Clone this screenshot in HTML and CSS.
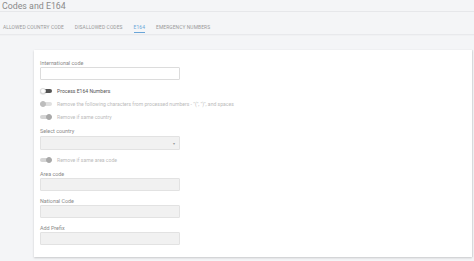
FILE: index.html
```html
<!DOCTYPE html>
<html>
<head>
<meta charset="utf-8">
<link rel="stylesheet" href="styles.css">
</head>
<body>
<div class="page">
  <div class="title-bar"><span class="title">Codes and E164</span></div>
  <nav class="tabs">
    <span class="tab">ALLOWED COUNTRY CODE</span>
    <span class="tab">DISALLOWED CODES</span>
    <span class="tab active">E164</span>
    <span class="tab">EMERGENCY NUMBERS</span>
  </nav>
  <main class="content">
    <section class="card">
      <div class="label">International code</div>
      <div class="input"></div>

      <div class="toggle-row first">
        <span class="toggle off"><span class="knob"></span></span>
        <span class="toggle-text strong">Process E164 Numbers</span>
      </div>
      <div class="toggle-row">
        <span class="toggle disabled"><span class="knob"></span></span>
        <span class="toggle-text muted">Remove the following characters from processed numbers - "(", ")", and spaces</span>
      </div>
      <div class="toggle-row">
        <span class="toggle disabled on"><span class="knob"></span></span>
        <span class="toggle-text muted">Remove if same country</span>
      </div>

      <div class="label sel-label">Select country</div>
      <div class="input disabled select"><span class="arrow">▾</span></div>

      <div class="toggle-row after-select">
        <span class="toggle disabled on"><span class="knob"></span></span>
        <span class="toggle-text muted">Remove if same area code</span>
      </div>

      <div class="label area-label">Area code</div>
      <div class="input disabled"></div>

      <div class="label next-label">National Code</div>
      <div class="input disabled"></div>

      <div class="label next-label">Add Prefix</div>
      <div class="input disabled"></div>
    </section>
  </main>
</div>
</body>
</html>
```

FILE: styles.css
```css
html, body {
  margin: 0;
  padding: 0;
}
body {
  background: #f4f5f7;
  font-family: Roboto, "Liberation Sans", Arial, sans-serif;
  color: #777;
  width: 474px;
  height: 261px;
  overflow: hidden;
}
.page {
  display: flex;
  flex-direction: column;
}
.title-bar {
  height: 11px;
  border-bottom: 1px solid #e6e7ea;
  padding-left: 2px;
  display: flex;
  align-items: center;
}
.title {
  font-size: 8.8px;
  line-height: 10px;
  color: #8a8a8a;
}
.tabs {
  height: 22px;
  display: flex;
  align-items: center;
  gap: 11px;
  padding-left: 3px;
  border-bottom: 1px solid #e8e9ec;
  box-shadow: 0 1px 0 #f0f1f3;
}
.tab {
  font-size: 4.9px;
  letter-spacing: 0.1px;
  color: #999;
  position: relative;
  line-height: 6px;
  top: 4px;
}
.tab.active {
  color: #6aa5d8;
}
.tab.active::after {
  content: "";
  position: absolute;
  left: 0;
  right: 0;
  top: 8px;
  height: 1px;
  background: #6aa5d8;
}
.content {
  padding: 15px 2px 0 34px;
}
.card {
  background: #fff;
  height: 207px;
  box-sizing: border-box;
  padding: 10px 6px 9px 6px;
  box-shadow: 0 1px 2px rgba(0,0,0,0.18), 1px 0 1px rgba(0,0,0,0.06);
  display: flex;
  flex-direction: column;
  align-items: flex-start;
}
.label {
  font-size: 5.4px;
  line-height: 7px;
  color: #8a8a8a;
}
.input {
  width: 140px;
  height: 13px;
  box-sizing: border-box;
  border: 1px solid #dcdcdc;
  border-radius: 1px;
  background: #fff;
}
.input.disabled {
  background: #f1f1f1;
  border-color: #e2e2e2;
}
.select {
  height: 14px;
  margin-top: 1px;
  position: relative;
  display: flex;
  align-items: center;
  justify-content: flex-end;
  padding-right: 4px;
}
.arrow {
  font-size: 4px;
  color: #999;
}
.toggle-row {
  height: 13px;
  display: flex;
  align-items: center;
  gap: 5px;
}
.toggle-row.first {
  margin-top: 4.5px;
}
.toggle-row.after-select {
  margin-top: 3.5px;
}
.sel-label {
  margin-top: 4.5px;
}
.area-label {
  margin-top: 4px;
  margin-bottom: 0.5px;
}
.next-label {
  margin-top: 6.5px;
  margin-bottom: 0.5px;
}
.toggle {
  width: 12px;
  height: 6px;
  position: relative;
  display: inline-block;
}
.toggle::before {
  content: "";
  position: absolute;
  left: 2px;
  right: 0;
  top: 1px;
  height: 4px;
  border-radius: 2px;
  background: #555;
}
.toggle .knob {
  position: absolute;
  left: 0;
  top: 0;
  width: 6px;
  height: 6px;
  border-radius: 50%;
  background: #fff;
  box-sizing: border-box;
  border: 0.5px solid #ddd;
  box-shadow: 0 0.5px 1px rgba(0,0,0,0.2);
}
.toggle.disabled::before {
  background: #e0e0e0;
  left: 0;
}
.toggle.disabled .knob {
  background: #bdbdbd;
  border-color: #bdbdbd;
  box-shadow: none;
}
.toggle.disabled.on .knob {
  left: auto;
  right: 0;
  background: #a9a9a9;
  border-color: #a9a9a9;
}
.toggle.disabled.on::before {
  background: #d5d5d5;
  right: 1px;
}
.toggle-text {
  font-size: 5.1px;
  line-height: 7px;
}
.toggle-text.strong {
  color: #555;
}
.toggle-text.muted {
  color: #bbb;
}
```
